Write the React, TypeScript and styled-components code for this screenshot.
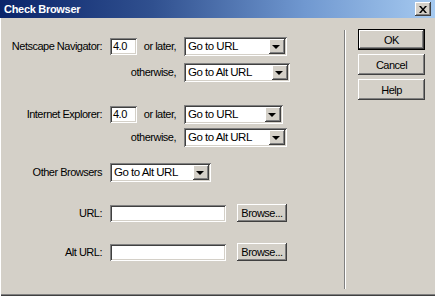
import styled, { createGlobalStyle, css } from "styled-components";

const GlobalStyle = createGlobalStyle`
  html, body {
    margin: 0;
    padding: 0;
    background: #d4d0c8;
  }
  body {
    font-family: "Liberation Sans", Arial, sans-serif;
    font-size: 11px;
    letter-spacing: -0.5px;
    color: #000;
  }
`;

const raised = css`
  box-shadow: inset -1px -1px #404040, inset 1px 1px #ffffff,
    inset -2px -2px #808080, inset 2px 2px #d4d0c8;
`;

const sunken = css`
  box-shadow: inset 1px 1px #808080, inset -1px -1px #ffffff,
    inset 2px 2px #404040, inset -2px -2px #d4d0c8;
`;

const App = () => {
  return (
    <>
      <GlobalStyle />
      <Window>
        <TitleBar>
          <Title>Check Browser</Title>
          <CloseButton>
            <svg width="8" height="7" viewBox="0 0 8 7">
              <path d="M0 0h2l2 2.5L6 0h2L5 3.5 8 7H6L4 4.5 2 7H0l3-3.5z" fill="#000" />
            </svg>
          </CloseButton>
        </TitleBar>
        <Body>
          <Form>
            <Row $top={18}>
              <Label>Netscape Navigator:</Label>
              <VersionInput>4.0</VersionInput>
              <Note>or later,</Note>
              <Select $width={103}>Go to URL</Select>
            </Row>
            <Row $top={6}>
              <span />
              <span />
              <Note>otherwise,</Note>
              <Select $width={106}>Go to Alt URL</Select>
            </Row>
            <Row $top={22}>
              <Label>Internet Explorer:</Label>
              <VersionInput>4.0</VersionInput>
              <Note>or later,</Note>
              <Select $width={99}>Go to URL</Select>
            </Row>
            <Row $top={3}>
              <span />
              <span />
              <Note>otherwise,</Note>
              <Select $width={103}>Go to Alt URL</Select>
            </Row>
            <Row $top={15}>
              <Label>Other Browsers</Label>
              <Wide>
                <Select $width={101}>Go to Alt URL</Select>
              </Wide>
            </Row>
            <Row $top={21}>
              <Label>URL:</Label>
              <Wide>
                <TextField />
                <SmallButton>Browse...</SmallButton>
              </Wide>
            </Row>
            <Row $top={19}>
              <Label>Alt URL:</Label>
              <Wide>
                <TextField />
                <SmallButton>Browse...</SmallButton>
              </Wide>
            </Row>
          </Form>
          <Separator />
          <ButtonColumn>
            <DialogButton $default>OK</DialogButton>
            <DialogButton>Cancel</DialogButton>
            <DialogButton>Help</DialogButton>
          </ButtonColumn>
        </Body>
      </Window>
    </>
  );
};

export default App;

const Window = styled.div`
  width: 435px;
  height: 296px;
  display: flex;
  flex-direction: column;
  background: #d4d0c8;
  overflow: hidden;
`;

const TitleBar = styled.div`
  height: 18px;
  flex: none;
  display: flex;
  align-items: center;
  padding: 0 4px 0 4px;
  background: linear-gradient(to right, #0a246a, #30508f 35%, #7098d0 70%, #a6caf0);
`;

const Title = styled.span`
  flex: 1;
  color: #fff;
  font-weight: bold;
  font-size: 11px;
  letter-spacing: -0.3px;
`;

const CloseButton = styled.div`
  width: 16px;
  height: 14px;
  display: flex;
  align-items: center;
  justify-content: center;
  background: #d4d0c8;
  ${raised}
`;

const Body = styled.div`
  flex: 1;
  display: flex;
  border-left: 1px solid #ffffff;
  box-shadow: inset 0 -1px #404040, inset 0 -2px #808080;
`;

const Form = styled.div`
  width: 343px;
  flex: none;
  display: flex;
  flex-direction: column;
`;

const Row = styled.div<{ $top: number }>`
  margin-top: ${(p) => p.$top}px;
  height: 20px;
  display: grid;
  grid-template-columns: 109px 27px 47px 1fr;
  align-items: center;
`;

const Label = styled.span`
  justify-self: end;
  padding-right: 8px;
  white-space: nowrap;
`;

const Note = styled.span`
  grid-column: 3;
  justify-self: end;
  padding-right: 8px;
  white-space: nowrap;
`;

const Wide = styled.div`
  grid-column: 2 / 5;
  display: flex;
  align-items: center;
  gap: 11px;
`;

const VersionInput = styled.div`
  height: 17px;
  box-sizing: border-box;
  padding: 2px 0 0 3px;
  background: #fff;
  ${sunken}
`;

const Select = styled.div<{ $width: number }>`
  width: ${(p) => p.$width}px;
  height: 19px;
  box-sizing: border-box;
  position: relative;
  padding: 3px 0 0 4px;
  background: #fff;
  white-space: nowrap;
  font-size: 11.5px;
  ${sunken}

  &::after {
    content: "";
    position: absolute;
    right: 2px;
    top: 2px;
    width: 16px;
    height: 15px;
    background: #d4d0c8;
    box-shadow: inset -1px -1px #404040, inset 1px 1px #ffffff,
      inset -2px -2px #808080;
  }

  &::before {
    content: "";
    position: absolute;
    z-index: 1;
    right: 7px;
    top: 8px;
    border-left: 4px solid transparent;
    border-right: 4px solid transparent;
    border-top: 4px solid #000;
  }
`;

const TextField = styled.div`
  width: 116px;
  height: 17px;
  background: #fff;
  ${sunken}
`;

const SmallButton = styled.div`
  width: 50px;
  height: 18px;
  box-sizing: border-box;
  display: flex;
  align-items: center;
  justify-content: center;
  background: #d4d0c8;
  ${raised}
`;

const Separator = styled.div`
  width: 1px;
  margin: 12px 0 7px;
  background: #808080;
  border-right: 1px solid #ffffff;
`;

const ButtonColumn = styled.div`
  display: flex;
  flex-direction: column;
  gap: 4px;
  padding: 11px 0 0 12px;
`;

const DialogButton = styled.div<{ $default?: boolean }>`
  width: 67px;
  height: 21px;
  box-sizing: border-box;
  display: flex;
  align-items: center;
  justify-content: center;
  background: #d4d0c8;
  ${(p) =>
    p.$default
      ? css`
          box-shadow: inset 0 0 0 1px #000, inset -2px -2px #404040,
            inset 2px 2px #ffffff, inset -3px -3px #808080;
        `
      : raised}
`;
